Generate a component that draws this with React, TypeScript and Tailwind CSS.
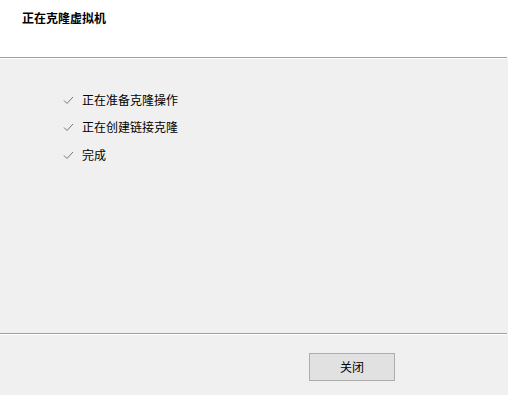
const steps = ["正在准备克隆操作", "正在创建链接克隆", "完成"];

const Check = () => (
  <svg width="12" height="12" viewBox="0 0 12 12" className="shrink-0">
    <path d="M2 6.5 L5 9.5 L11 3" fill="none" stroke="#6f7780" strokeWidth="1" />
  </svg>
);

export default function App() {
  return (
    <div
      className="w-[508px] h-[395px] flex flex-col bg-[#f0f0f0] text-[12px] text-black"
      style={{ fontFamily: '"Microsoft YaHei", "Noto Sans CJK SC", sans-serif' }}
    >
      <div className="h-[57px] bg-white pl-[22px] pt-[9px] font-bold leading-[18px]">
        正在克隆虚拟机
      </div>
      <div className="h-px bg-[#a0a0a0] mr-[1px]" />
      <div className="h-px bg-white mr-[1px]" />
      <div className="flex-1 flex flex-col gap-[10.5px] pl-[62px] pt-[32px]">
        {steps.map((s) => (
          <div key={s} className="flex items-center gap-[8px] h-[17px]">
            <Check />
            <span>{s}</span>
          </div>
        ))}
      </div>
      <div className="h-px bg-[#a0a0a0] mr-[1px]" />
      <div className="h-px bg-white mr-[1px]" />
      <div className="h-[60px] flex items-start justify-end pt-[18px] pr-[113px]">
        <button className="w-[86px] h-[28px] border border-[#adadad] bg-[#e1e1e1] text-[12px]">
          关闭
        </button>
      </div>
    </div>
  );
}
